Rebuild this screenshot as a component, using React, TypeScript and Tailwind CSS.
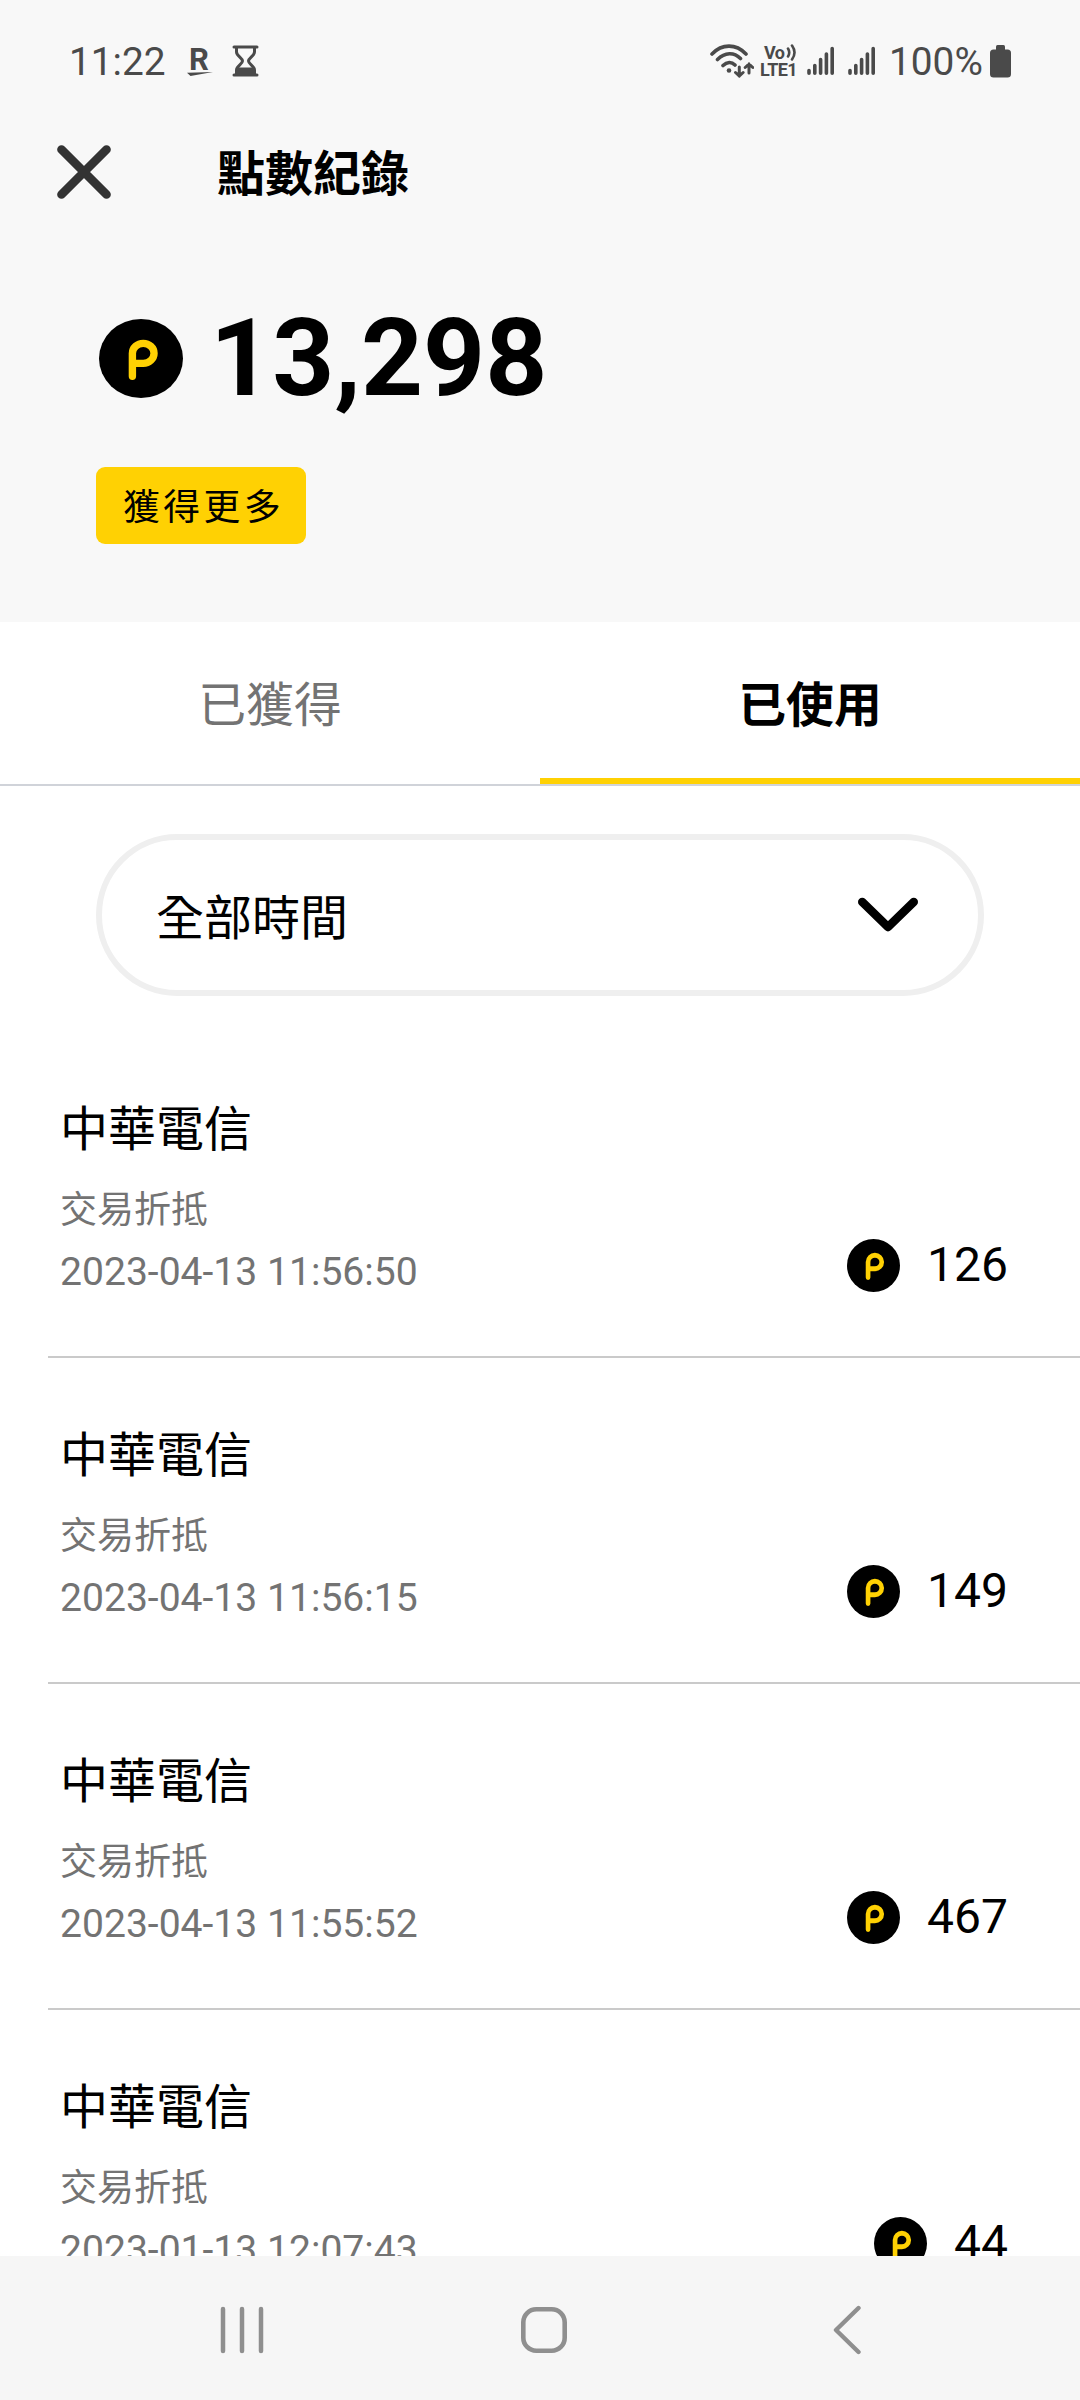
import React, { useState } from 'react';

interface PointRecord {
    title: string;
    kind: string;
    time: string;
    points: number;
}

const usedRecords: PointRecord[] = [
    { title: '中華電信', kind: '交易折抵', time: '2023-04-13 11:56:50', points: 126 },
    { title: '中華電信', kind: '交易折抵', time: '2023-04-13 11:56:15', points: 149 },
    { title: '中華電信', kind: '交易折抵', time: '2023-04-13 11:55:52', points: 467 },
    { title: '中華電信', kind: '交易折抵', time: '2023-01-13 12:07:43', points: 44 },
];

const PointIcon = ({ className }: { className: string }) => (
    <svg className={className} viewBox="0 0 83 79" preserveAspectRatio="none" fill="none">
        <ellipse cx="41.5" cy="39.5" rx="41.5" ry="39.5" fill="#000" />
        <path d="M33 57.3V34.3A10.7 10 0 1 1 43.7 44.3H33" stroke="#ffd103" strokeWidth="7.3" strokeLinecap="round" />
    </svg>
);

const SignalIcon = () => (
    <svg className="h-[30px] w-[28px]" viewBox="0 0 28 30" stroke="#4a4a4a" strokeWidth="3.6" strokeLinecap="round">
        <path d="M2 24.5V27.2M7.8 19.5V27.2M13.6 13.5V27.2M19.4 8V27.2M25.2 2.5V27.2" />
    </svg>
);

const StatusBar = () => (
    <div className="flex h-[120px] items-center pt-[2px] pr-[69px] pl-[69px] text-[38.8px] leading-[46px] text-[#4a4a4a]">
        <div className="w-[98px] pt-[2px] whitespace-nowrap">11:22</div>
        <div className="ml-[20px] flex h-[32px] w-[26px] flex-col items-center">
            <div className="h-[27px] pr-[2px] text-[31px] leading-[29px] font-bold">R</div>
            <svg className="h-[4px] w-[26px]" viewBox="0 0 26 4" fill="#4a4a4a">
                <path d="M0 0.8L26 0L3.5 4Z" />
            </svg>
        </div>
        <svg className="ml-[19px] h-[32px] w-[27px]" viewBox="0 0 27 32" fill="none" stroke="#4a4a4a">
            <path d="M2 2H25M2 30H25" strokeWidth="3" strokeLinecap="round" />
            <path d="M4.5 3V7C4.5 11 10.5 13 10.5 16C10.5 19 4.5 21 4.5 25V29M22.5 3V7C22.5 11 16.5 13 16.5 16C16.5 19 22.5 21 22.5 25V29" strokeWidth="3" />
            <path d="M5 22.5H22V29H5Z" fill="#4a4a4a" stroke="none" />
        </svg>
        <div className="ml-auto flex items-center">
            <svg className="h-[34px] w-[44px]" viewBox="0 0 44 34" fill="none" stroke="#4a4a4a" strokeWidth="3.6" strokeLinecap="round">
                <path d="M2 10C12 -0.5 26 -0.5 36 10M7.5 15.5C15 8 24 8 30.5 14.5M13 21.5C17 17.5 21.5 17.5 25 21" />
                <circle cx="19" cy="26.5" r="2.3" fill="#4a4a4a" stroke="none" />
                <path d="M29.3 23V32M25.5 28.5L29.3 32L33.1 28.5M39 29V20M35.2 23.5L39 20L42.8 23.5" strokeWidth="3" />
            </svg>
            <div className="ml-[6px] flex w-[39px] flex-col text-[18px] leading-[17px] font-bold tracking-[-0.6px]">
                <div className="flex items-center pl-[4px]">
                    Vo
                    <svg className="ml-[2px] h-[17px] w-[11px]" viewBox="0 0 11 17" fill="none" stroke="#4a4a4a" strokeWidth="2.6" strokeLinecap="round">
                        <path d="M2 4.5Q4.5 8.5 2 12.5M6 1.5Q11 8.5 6 15.5" />
                    </svg>
                </div>
                <div>LTE1</div>
            </div>
            <div className="ml-[8px] flex gap-[13px]">
                <SignalIcon />
                <SignalIcon />
            </div>
            <div className="ml-[13px] w-[94px] pt-[2px] whitespace-nowrap">100%</div>
            <svg className="ml-[7px] h-[33px] w-[21px]" viewBox="0 0 21 33" fill="#4a4a4a">
                <rect x="6" y="0" width="9" height="8" rx="1.5" />
                <rect x="0" y="4.5" width="21" height="28" rx="3.5" />
            </svg>
        </div>
    </div>
);

const RecordRow: React.FC<{ record: PointRecord }> = ({ record }) => {
    return (
        <div className="ml-[48px] flex h-[326px] shrink-0 justify-between border-b-2 border-[#cacaca] pr-[72px] pl-[12px]">
            <div className="pt-[65px]">
                <div className="text-[48px] leading-[56px] text-black">{record.title}</div>
                <div className="mt-[29px] text-[37px] leading-[50px] text-[#737373]">{record.kind}</div>
                <div className="mt-[17px] font-[Roboto] text-[39.1px] leading-[46px] text-[#737373]">{record.time}</div>
            </div>
            <div className="mb-[63px] flex h-[56px] items-center gap-[27.5px] self-end">
                <PointIcon className="h-[53px] w-[53px]" />
                <div className="font-[Roboto] text-[48px] leading-[56px] text-black">{record.points}</div>
            </div>
        </div>
    );
};

const NavigationBar = () => (
    <div className="flex h-[144px] shrink-0 items-center bg-[#f6f6f6] pt-[4px]">
        <svg className="ml-[217px] h-[50px] w-[50px]" viewBox="0 0 50 50" stroke="#8f8f8f" strokeWidth="4.5" strokeLinecap="round">
            <path d="M6 4V46M25 4V46M44 4V46" />
        </svg>
        <svg className="ml-[252px] h-[50px] w-[50px]" viewBox="0 0 50 50" fill="none" stroke="#8f8f8f" strokeWidth="4.6">
            <rect x="4.3" y="4.3" width="41.4" height="41.4" rx="13" />
        </svg>
        <svg className="ml-[263px] h-[50px] w-[30px]" viewBox="0 0 30 50" fill="none" stroke="#8f8f8f" strokeWidth="4.4" strokeLinecap="round" strokeLinejoin="round">
            <path d="M26.5 3L4 25L26.5 47" />
        </svg>
    </div>
);

const App = () => {
    const [activeTab, setActiveTab] = useState('used');

    return (
        <div className="flex h-[2400px] w-[1080px] flex-col overflow-hidden bg-white font-['Noto_Sans_CJK_TC',sans-serif]" lang="zh-Hant">
            <div className="h-[622px] shrink-0 bg-[#f8f8f8]">
                <div className="font-[Roboto]">
                    <StatusBar />
                </div>
                <div className="flex h-[104px] items-center pl-[57px]">
                    <svg className="h-[54px] w-[54px]" viewBox="0 0 54 54" stroke="#333" strokeWidth="8.7" strokeLinecap="round">
                        <path d="M4.5 4.5L49.5 49.5M49.5 4.5L4.5 49.5" />
                    </svg>
                    <h1 className="ml-[106px] pb-[4px] text-[48px] leading-[56px] font-bold text-black">點數紀錄</h1>
                </div>
                <div className="mt-[70px] flex h-[128px] items-center pl-[99px]">
                    <PointIcon className="h-[79px] w-[84px]" />
                    <div className="ml-[27px] font-[Roboto] text-[108.3px] leading-[128px] font-bold text-black">13,298</div>
                </div>
                <button className="mt-[45px] ml-[96px] flex h-[77px] w-[210px] items-center rounded-[9px] bg-[#ffd103] pb-[3px] pl-[27px] text-[36.8px] leading-[50px] tracking-[3.5px] whitespace-nowrap text-black">獲得更多</button>
            </div>

            <div className="flex h-[164px] shrink-0 border-b-2 border-[#d0d3d9] text-[47.8px]">
                <button className="flex-1 pb-[2px] text-[#737373]" onClick={() => setActiveTab('earned')}>已獲得</button>
                <button className={activeTab === 'used' ? 'flex-1 border-b-[6px] border-[#ffd103] pt-[3px] font-bold text-black' : 'flex-1 text-[#737373]'} onClick={() => setActiveTab('used')}>已使用</button>
            </div>

            <div className="mx-[96px] mt-[48px] mb-[36px] flex h-[162px] shrink-0 items-center justify-between rounded-full border-[6px] border-[#efefef] pr-[60px] pl-[54px]">
                <div className="pb-[3px] text-[48px] leading-[56px] text-black">全部時間</div>
                <svg className="h-[36px] w-[60px]" viewBox="0 0 60 36" fill="none" stroke="#000" strokeWidth="8.6" strokeLinecap="round" strokeLinejoin="round">
                    <path d="M4.3 5L30 30L55.7 5" />
                </svg>
            </div>

            <div className="flex min-h-0 flex-1 flex-col overflow-hidden">
                {usedRecords.map((record) => (
                    <RecordRow key={record.time} record={record} />
                ))}
            </div>
            <NavigationBar />
        </div>
    );
}

export default App;
